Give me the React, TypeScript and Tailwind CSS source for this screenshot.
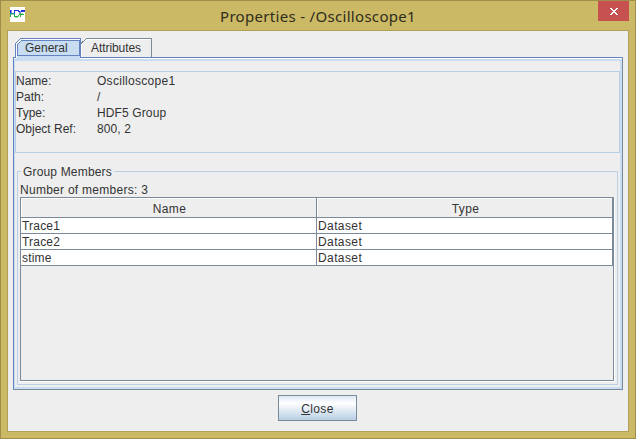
const info: [string, string, string][] = [
  ['Name:', 'Oscilloscope1', 'tracking-[0.29px]'],
  ['Path:', '/', 'tracking-normal'],
  ['Type:', 'HDF5 Group', 'tracking-[0.12px]'],
  ['Object Ref:', '800, 2', 'tracking-[0.1px]'],
];

const members = ['Trace1', 'Trace2', 'stime'];

function HdfIcon() {
  return (
    <svg width="15" height="15" viewBox="0 0 15 15" className="bg-white" shapeRendering="crispEdges">
      <path d="M0 3h1v3h-1zM4 3h1v3h-1zM5 3h4v1h-4zM8 4h2v1h-2zM11 3h4v2h-4z" fill="#2238dc" />
      <path d="M1 3h1v3h-1zM9 5h1v2h-1zM10 4h1v2h-1z" fill="#6f86ea" />
      <path d="M0 6h5v1h-5zM0 7h1v1h-1zM4 7h1v1h-1z" fill="#1b8f8a" />
      <path d="M0 8h1v2h-1zM4 8h1v2h-1zM5 9h3v1h-3zM8 8h1v1h-1zM9 7h1v1h-1zM10 6h1v4h-1zM11 7h3v1h-3z" fill="#22b53c" />
      <path d="M1 7h3v1h-3zM5 10h3v1h-3zM8 9h1v1h-1zM11 6h2v1h-2z" fill="#9adba6" />
    </svg>
  );
}

function TitleBar() {
  return (
    <header className="flex h-[29px] shrink-0">
      <div className="flex w-[93px] pt-1.5 pl-[9px]">
        <HdfIcon />
      </div>
      <h1 className="flex-1 pt-[5px] text-center font-['Noto_Sans',sans-serif] text-[15px] leading-5 font-normal tracking-[0.31px] text-[#2f2c20]">
        Properties - /Oscilloscope1
      </h1>
      <div className="flex w-[93px] justify-end pr-[6px]">
        <button className="flex h-5 w-[31px] items-center justify-center bg-[#c75050]" aria-label="Close window">
          <svg width="8" height="7" viewBox="0 0 8 7" className="mt-[1px] ml-[1px]" fill="#fff" shapeRendering="crispEdges">
            <path d="M0 0h2v1h1v1h2v-1h1v-1h2v1h-1v1h-1v1h-1v1h1v1h1v1h1v1h-2v-1h-1v-1h-2v1h-1v1h-2v-1h1v-1h1v-1h1v-1h-1v-1h-1v-1h-1z" />
          </svg>
        </button>
      </div>
    </header>
  );
}

function Tabs() {
  return (
    <nav className="relative z-10 -mb-[3px] ml-[2px] flex h-[22px]">
      <button className="relative flex h-[22px] w-[66px] items-start pl-[10px] leading-5">
        <svg width="66" height="22" viewBox="0 0 66 22" className="absolute top-0 left-0" fill="none" shapeRendering="crispEdges">
          <path d="M1 22V5.500L6.500 1H65V22z" fill="#c8ddf2" />
          <path d="M1.500 20V5.500L6.500 1.500H65" stroke="#fff" />
          <path d="M0.500 20V5.500L5.500 0.500H65.500V19" stroke="#6382bf" />
          <path d="M2.500 17.500V6.500L6.500 2.500H64.500V17.500z" stroke="#6382bf" />
        </svg>
        <span className="relative">General</span>
      </button>
      <button className="relative flex h-[19px] w-[71px] items-start pl-[10px] leading-5">
        <svg width="71" height="19" viewBox="0 0 71 19" className="absolute top-0 left-0" fill="none" shapeRendering="crispEdges">
          <path d="M0.500 19V6.500L6 1.500H70" stroke="#fff" />
          <path d="M0 5.500L5.500 0.500H70.500V19" stroke="#7a8a99" />
        </svg>
        <span className="relative tracking-[-0.07px]">Attributes</span>
      </button>
    </nav>
  );
}

function InfoBox() {
  return (
    <section className="mt-[10px] h-[82px] border border-[#b8cfe5] pt-px">
      {info.map(([label, value, tracking]) => (
        <div key={label} className="flex h-4 leading-4">
          <span className="w-[81px]">{label}</span>
          <span className={tracking}>{value}</span>
        </div>
      ))}
    </section>
  );
}

function GroupMembers() {
  return (
    <fieldset className="mt-[11px] mr-[2px] ml-[2px] h-[221px] border border-[#b8cfe5] px-[2px]">
      <legend className="ml-[1px] h-[15px] px-[2px] leading-[17px] tracking-[0.17px]">Group Members</legend>
      <div className="mt-[3px] h-[15px] leading-[17px] tracking-[0.27px]">Number of members: 3</div>
      <div className="h-[185px] w-[595px] border-r border-b border-white">
        <div className="h-[184px] w-[594px] border border-[#7a8a99]">
          <table className="w-[592px] table-fixed border-separate border-spacing-0">
            <thead>
              <tr>
                {['Name', 'Type'].map((h) => (
                  <th key={h} className="h-5 border-r border-b border-[#7a8a99] p-0 font-normal">
                    <div className="h-[19px] border-t border-l border-white pt-px pl-px leading-[18px] tracking-[0.4px]">{h}</div>
                  </th>
                ))}
              </tr>
            </thead>
            <tbody>
              {members.map((m) => (
                <tr key={m} className="bg-white">
                  <td className="h-4 border-r border-b border-[#7a8a99] p-0 pl-px tracking-[0.2px]">
                    <div className="h-[15px] leading-[17px]">{m}</div>
                  </td>
                  <td className="h-4 border-r border-b border-[#7a8a99] p-0 pl-px tracking-[0.4px]">
                    <div className="h-[15px] leading-[17px]">Dataset</div>
                  </td>
                </tr>
              ))}
            </tbody>
          </table>
        </div>
      </div>
    </fieldset>
  );
}

export default function App() {
  return (
    <div className="flex h-[439px] w-[636px] flex-col border border-[#9e8d4b] bg-[#cbb965] font-['Liberation_Sans',Arial,sans-serif] text-[12px] text-[#333]">
      <TitleBar />
      <main className="mx-[6px] flex h-[402px] flex-col border border-[#b0a057] bg-[#eee] px-[5px] pt-[7px]">
        <Tabs />
        <div className="h-[333px] w-[610px] border border-t-[#6382bf] border-r-[#7a8a99] border-b-[#7a8a99] border-l-[#6382bf]">
          <div className="h-[331px] border-t border-white">
            <div className="h-[330px] border-t-2 border-r-2 border-b-2 border-l border-[#c8ddf2]">
              <InfoBox />
              <GroupMembers />
            </div>
          </div>
        </div>
        <button className="mt-[5px] ml-[265px] h-[26px] w-[79px] border border-[#7a8a99] bg-linear-to-b from-[#dde8f3] via-white via-30% to-[#b8cfe5] pt-px text-center leading-6 tracking-[0.4px]">
          <span className="underline">C</span>lose
        </button>
      </main>
    </div>
  );
}
